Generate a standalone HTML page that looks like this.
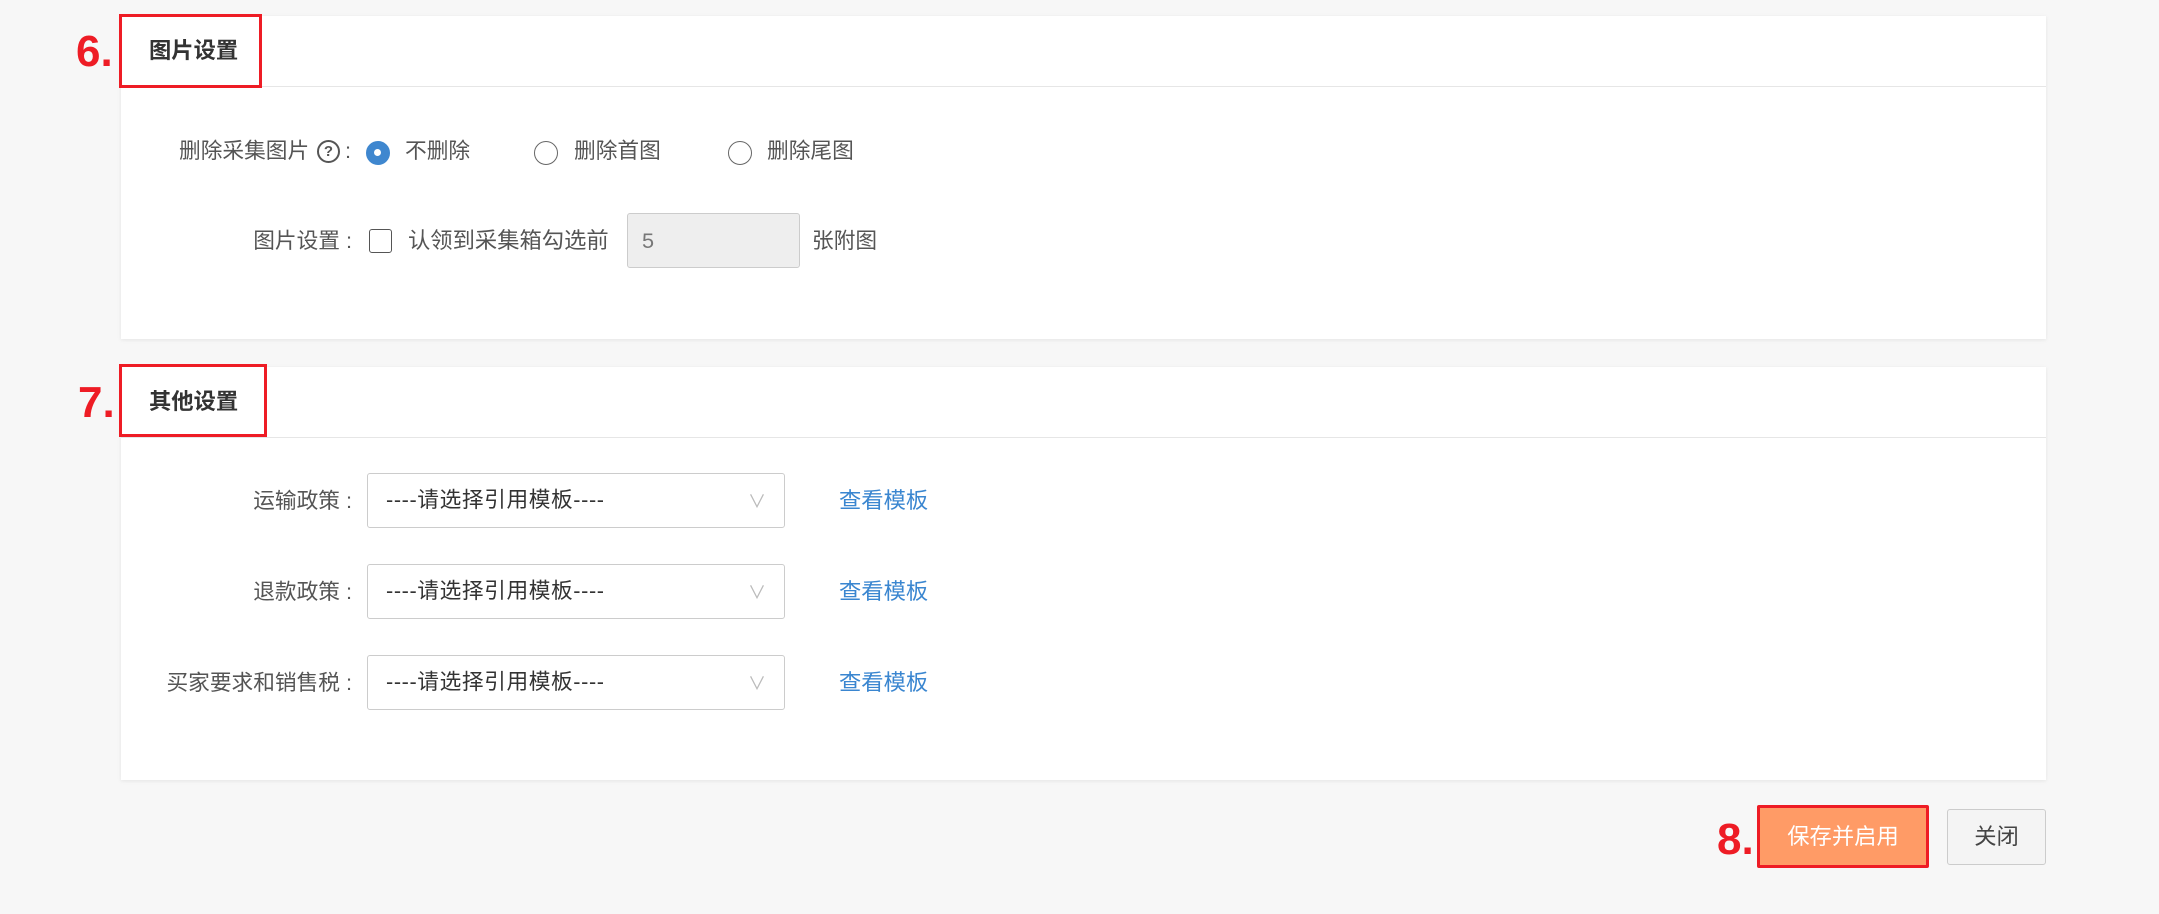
<!DOCTYPE html>
<html><head><meta charset="utf-8"><style>
*{box-sizing:border-box;margin:0;padding:0}
body{width:2159px;height:914px;background:#f7f7f7;font-family:"Liberation Sans","Noto Sans CJK SC",sans-serif;color:#555;font-size:21.7px;position:relative;overflow:hidden}
.abs{position:absolute}
.card{position:absolute;left:121px;width:1925px;background:#fff;box-shadow:0 1px 4px rgba(0,0,0,0.08)}
.hline{position:absolute;left:0;right:0;height:1px;background:#e6e6e6}
.red{position:absolute;border:3px solid #ee1c25}
.num{position:absolute;color:#ee1c25;font-weight:bold;font-size:44px;line-height:1}
.title{position:absolute;font-weight:bold;color:#333;font-size:22.3px;line-height:1}
.t{position:absolute;line-height:24px;white-space:nowrap}
.r{position:absolute;right:1807px;line-height:24px;white-space:nowrap;text-align:right}
.radio{position:absolute;width:24px;height:24px;border:1.5px solid #666;border-radius:50%;background:#fff}
.sel{position:absolute;left:367px;width:418px;height:55px;border:1.5px solid #ccc;border-radius:3px;background:#fff}
.sel span{position:absolute;left:18px;top:14px;color:#333;line-height:24px;letter-spacing:0.6px}
.sel i{position:absolute;right:18px;top:14px;color:#bbb;font-style:normal;font-size:18px}
.link{position:absolute;left:839px;color:#3a86d0;line-height:24px;font-size:22.3px}
</style></head><body>
<div class="card" style="top:16px;height:323px">
  <div class="hline" style="top:70px"></div>
</div>
<div class="red" style="left:119px;top:14px;width:143px;height:74px"></div>
<div class="num" style="left:76px;top:30px">6.</div>
<div class="title" style="left:149px;top:40px">图片设置</div>

<div class="t" style="left:179px;top:139px">删除采集图片</div>
<div class="abs" style="left:317px;top:140px;width:23px;height:23px;border:2px solid #555;border-radius:50%;font-size:15px;line-height:19px;text-align:center;font-weight:bold">?</div>
<div class="t" style="left:345px;top:139px">:</div>
<div class="radio" style="left:366px;top:141px;background:#3f87cf;border-color:#3f87cf"><div style="position:absolute;left:7px;top:7px;width:7px;height:7px;background:#fff;border-radius:50%"></div></div>
<div class="t" style="left:405px;top:139px">不删除</div>
<div class="radio" style="left:534px;top:141px"></div>
<div class="t" style="left:574px;top:139px">删除首图</div>
<div class="radio" style="left:728px;top:141px"></div>
<div class="t" style="left:767px;top:139px">删除尾图</div>

<div class="r" style="top:229px">图片设置 :</div>
<div class="abs" style="left:369px;top:229px;width:23px;height:24px;border:1.5px solid #555;border-radius:3px;background:#fff"></div>
<div class="t" style="left:408px;top:229px;font-size:22.3px">认领到采集箱勾选前</div>
<div class="abs" style="left:627px;top:213px;width:173px;height:55px;background:#eee;border:1.5px solid #ccc;border-radius:3px"><span style="position:absolute;left:14px;top:15px;color:#777;line-height:24px">5</span></div>
<div class="t" style="left:812px;top:229px">张附图</div>

<div class="card" style="top:367px;height:413px">
  <div class="hline" style="top:70px"></div>
</div>
<div class="red" style="left:119px;top:364px;width:148px;height:73px"></div>
<div class="num" style="left:78px;top:381px">7.</div>
<div class="title" style="left:149px;top:391px">其他设置</div>

<div class="r" style="top:489px">运输政策 :</div>
<div class="sel" style="top:473px"><span>----请选择引用模板----</span><i>∨</i></div>
<div class="link" style="top:489px">查看模板</div>
<div class="r" style="top:580px">退款政策 :</div>
<div class="sel" style="top:564px"><span>----请选择引用模板----</span><i>∨</i></div>
<div class="link" style="top:580px">查看模板</div>
<div class="r" style="top:671px">买家要求和销售税 :</div>
<div class="sel" style="top:655px"><span>----请选择引用模板----</span><i>∨</i></div>
<div class="link" style="top:671px">查看模板</div>

<div class="num" style="left:1717px;top:818px">8.</div>
<div class="abs" style="left:1757px;top:805px;width:172px;height:63px;background:#ff9b66;border:3px solid #ee1c25;border-radius:2px;color:#fff;text-align:center;line-height:57px;font-size:22.3px">保存并启用</div>
<div class="abs" style="left:1947px;top:809px;width:99px;height:56px;background:#f4f4f4;border:1.5px solid #ccc;border-radius:3px;color:#444;text-align:center;line-height:53px;font-size:22.3px">关闭</div>
</body></html>
